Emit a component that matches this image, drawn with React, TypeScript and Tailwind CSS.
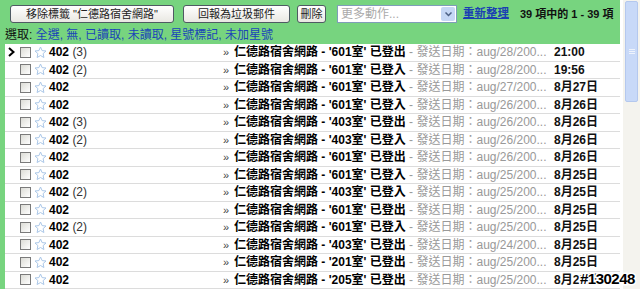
import { ReactNode } from "react";

const rows = [
  { n: "(3)", room: "601", act: "已登出", d: "aug/28/200...", t: "21:00", cur: true },
  { n: "(2)", room: "601", act: "已登入", d: "aug/28/200...", t: "19:56" },
  { n: "", room: "601", act: "已登入", d: "aug/27/200...", t: "8月27日" },
  { n: "", room: "601", act: "已登入", d: "aug/26/200...", t: "8月26日" },
  { n: "(3)", room: "403", act: "已登出", d: "aug/26/200...", t: "8月26日" },
  { n: "(2)", room: "403", act: "已登入", d: "aug/26/200...", t: "8月26日" },
  { n: "", room: "601", act: "已登出", d: "aug/26/200...", t: "8月26日" },
  { n: "", room: "601", act: "已登入", d: "aug/25/200...", t: "8月25日" },
  { n: "(2)", room: "403", act: "已登入", d: "aug/25/200...", t: "8月25日" },
  { n: "", room: "601", act: "已登出", d: "aug/25/200...", t: "8月25日" },
  { n: "(2)", room: "601", act: "已登入", d: "aug/25/200...", t: "8月25日" },
  { n: "", room: "403", act: "已登出", d: "aug/24/200...", t: "8月25日" },
  { n: "", room: "201", act: "已登出", d: "aug/25/200...", t: "8月25日" },
  { n: "", room: "205", act: "已登出", d: "aug/25/200...", t: "8月25日" },
];

function Btn({ w, children }: { w: string; children: ReactNode }) {
  return (
    <div
      className={`${w} shrink-0 h-[18px] flex items-center justify-center rounded-[3px] border border-[#4f5a63] bg-gradient-to-b from-white to-[#e9e8e2] text-[11px] text-[#222] whitespace-nowrap`}
    >
      {children}
    </div>
  );
}

function Star() {
  return (
    <svg width="13" height="13" viewBox="0 0 13 13">
      <path
        d="M6.5 1 L8.1 4.6 L12 5 L9.1 7.6 L9.9 11.5 L6.5 9.5 L3.1 11.5 L3.9 7.6 L1 5 L4.9 4.6 Z"
        fill="#fff"
        stroke="#aac7e8"
        strokeWidth="1"
        strokeLinejoin="round"
      />
    </svg>
  );
}

export default function App() {
  return (
    <div
      className="relative w-[640px] h-[289px] overflow-hidden flex bg-white"
      style={{ fontFamily: '"Liberation Sans", "Noto Sans CJK TC", sans-serif' }}
    >
      <div className="w-[623px] shrink-0 flex flex-col">
        <div className="bg-[#77d47f] w-[620px] h-[44px] shrink-0 pl-[10px] pt-[5px]">
          <div className="flex items-center whitespace-nowrap">
            <Btn w="w-[164px]">移除標籤 "仁德路宿舍網路"</Btn>
            <Btn w="w-[107px] ml-[9px]">回報為垃圾郵件</Btn>
            <Btn w="w-[29px] ml-[7px]">刪除</Btn>
            <div className="w-[120px] ml-[11px] shrink-0 h-[18px] bg-white border border-[#7f9db9] flex items-center justify-between pl-[3px] pr-[1px]">
              <span className="text-[12px] text-[#aaa]">更多動作...</span>
              <div className="w-[14px] h-[14px] bg-[#c5d7f5] rounded-[2px] flex items-center justify-center">
                <svg width="7" height="5" viewBox="0 0 7 5">
                  <path d="M0.5 0.5 L3.5 3.5 L6.5 0.5" fill="none" stroke="#4d6185" strokeWidth="1.5" />
                </svg>
              </div>
            </div>
            <span className="shrink-0 ml-[6px] text-[11.5px] font-bold text-[#1a3fb3] underline">重新整理</span>
            <span className="shrink-0 ml-[11px] text-[11px] font-bold text-[#111]">39 項中的 1 - 39 項</span>
          </div>
          <div className="mt-[5px] -ml-[5px] text-[12px] leading-[14px] text-[#111] whitespace-nowrap">
            選取: <span className="text-[#1a44b8]">全選, 無, 已讀取, 未讀取, 星號標記, 未加星號</span>
          </div>
        </div>
        <div className="flex-1 border-l-[5px] border-[#77d47f] w-[620px]">
          {rows.map((r, i) => (
            <div
              key={i}
              className="h-[17.5px] flex items-center border-b border-[#dcdcdc] text-[12px] whitespace-nowrap"
            >
              <div className="w-[14px] pl-[3px] flex items-center">
                {r.cur && (
                  <svg width="7" height="10" viewBox="0 0 7 10">
                    <path d="M1 1 L5.5 5 L1 9" fill="none" stroke="#000" strokeWidth="2" />
                  </svg>
                )}
              </div>
              <div className="w-[11px] h-[11px] border border-[#7a7a7a] bg-gradient-to-br from-[#dcdcd6] to-white ml-[1px]" />
              <div className="ml-[3px] w-[14px] flex items-center"><Star /></div>
              <div className="ml-[1px] w-[174px]">
                <span className="font-bold">402</span>
                {r.n && <span className="text-[#333]"> {r.n}</span>}
              </div>
              <div className="w-[11px] text-[#444] text-[11px]">»</div>
              <div className="w-[320px] overflow-hidden">
                <span className="font-bold text-black">
                  仁德路宿舍網路 - '{r.room}室' {r.act}
                </span>
                <span className="text-[#999]"> - 發送日期：{r.d}</span>
              </div>
              <div className="font-bold text-[#111]">{r.t}</div>
            </div>
          ))}
        </div>
      </div>
      <div className="w-[17px] h-full bg-[#f4f3ee] pt-[1px] pl-[2px]">
        <div className="w-[13px] h-[101px] rounded-[2px] border border-[#b4c8ee] bg-[#c8d9f8] flex flex-col items-center justify-center gap-[1px]">
          <div className="w-[6px] h-px bg-[#eef3fc]" />
          <div className="w-[6px] h-px bg-[#eef3fc]" />
          <div className="w-[6px] h-px bg-[#eef3fc]" />
        </div>
      </div>
      <div
        className="absolute left-[580px] top-[271px] text-[15px] font-bold text-black tracking-[-0.5px] leading-none"
        style={{ WebkitTextStroke: "3px white", paintOrder: "stroke fill" }}
      >
        #130248
      </div>
    </div>
  );
}
